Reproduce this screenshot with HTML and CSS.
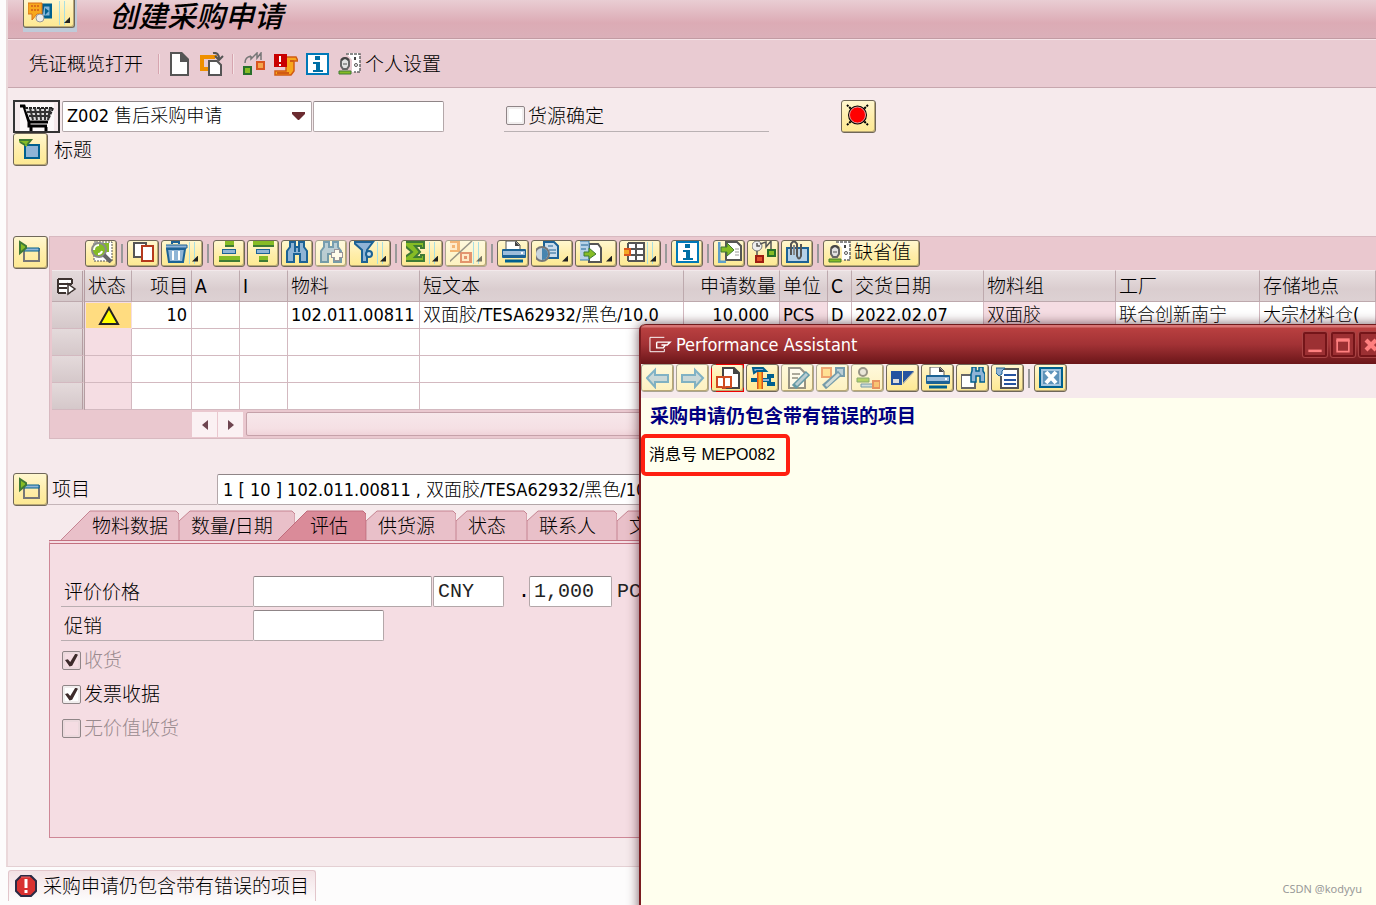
FILE: index.html
```html
<!DOCTYPE html>
<html lang="zh-CN">
<head>
<meta charset="utf-8">
<title>创建采购申请</title>
<link rel="stylesheet" href="styles.css">
</head>
<body>
<svg class="defs" aria-hidden="true">
  <symbol id="i-detail" viewBox="0 0 24 22"><path d="M6 1H22V20H4V1z" fill="#fff" stroke="#555" stroke-dasharray="2 1"/><rect x="6" y="2" width="13" height="9" fill="#86bc25"/><circle cx="9" cy="9" r="7" fill="#86bc25" stroke="#8a8a8a" stroke-width="2"/><path d="M4 9a5 5 0 0 1 5-5M8 13a4 4 0 0 0 4-3" fill="none" stroke="#fff" stroke-width="2"/><path d="M14 14l7 7" stroke="#666" stroke-width="4"/></symbol>
  <symbol id="i-copy" viewBox="0 0 24 22"><path d="M2 2H14V16H2z" fill="#fff" stroke="#555" stroke-width="2"/><path d="M10 5H21V20H10z" fill="#fff" stroke="#b5391c" stroke-width="2"/></symbol>
  <symbol id="i-trash" viewBox="0 0 24 22"><path d="M1 8L3 21H17L19 8z" fill="#8fb4d6" stroke="#1c6295" stroke-width="2"/><path d="M-2 4H21V7H-2z" fill="#8fb4d6" stroke="#1c6295"/><path d="M6 3V1H13V3" fill="none" stroke="#1c6295" stroke-width="2"/><path d="M7 10V19M13 10V19" stroke="#fff" stroke-width="2"/></symbol>
  <symbol id="i-asc" viewBox="0 0 24 22"><path d="M7 0H16V5H7zM1 15H22V20H1z" fill="#86bc25"/><path d="M7 5H16M1 20H22" stroke="#3f7a35" stroke-width="2"/><rect x="4.500" y="8.500" width="13" height="4" fill="#8fb4d6" stroke="#1c6295"/></symbol>
  <symbol id="i-desc" viewBox="0 0 24 22"><path d="M1 0H22V5H1zM7 15H16V20H7z" fill="#86bc25"/><path d="M1 5H22M7 20H16" stroke="#3f7a35" stroke-width="2"/><rect x="4.500" y="8.500" width="13" height="4" fill="#8fb4d6" stroke="#1c6295"/></symbol>
  <symbol id="i-find" viewBox="0 0 24 22"><path d="M4 1H9V6H13V1H18V6L21 10V21H14V13H8V21H1V10L4 6z" fill="#8fb4d6" stroke="#1c6295" stroke-width="2"/><path d="M9 6V11M13 6V11" stroke="#1c6295" stroke-width="2"/></symbol>
  <symbol id="i-findnext" viewBox="0 0 24 22"><path d="M4 1H9V6H13V1H18V6L21 10V21H14V13H8V21H1V10L4 6z" fill="#8fb4d6" stroke="#1c6295" stroke-width="2"/><path d="M17 8V20M11 14H23" stroke="#557" stroke-width="6"/><path d="M17 9V19M12 14H22" stroke="#fff" stroke-width="4"/></symbol>
  <symbol id="i-filter" viewBox="0 0 24 22"><path d="M-1 1H19L13 9V21H8V9z" fill="#8fb4d6" stroke="#1c6295" stroke-width="2"/><circle cx="15" cy="13" r="3" fill="#c5dbe9" stroke="#1c6295" stroke-width="2"/></symbol>
  <symbol id="i-sum" viewBox="0 0 24 22"><path d="M-1 1H18V7H15V5H9L14 11L9 16H15V14H18V20H-1V16L6 11L-1 5z" fill="#86bc25" stroke="#3f7a35" stroke-width="2"/></symbol>
  <symbol id="i-percent" viewBox="0 0 24 22"><rect x="-2" width="12" height="11" fill="#ec8a35"/><rect x="10" y="11" width="12" height="11" fill="#d25632"/><path d="M1 3H6V8H1zM13 14H18V19H13z" fill="none" stroke="#ffe4c4" stroke-width="2"/><path d="M-2 22L22 0" stroke="#555" stroke-width="1.500"/></symbol>
  <symbol id="i-print" viewBox="0 0 24 22"><path d="M4 9V0H14L18 4V9" fill="#fff" stroke="#555"/><path d="M13 0L18 5H13z" fill="#444"/><rect x="0" y="8" width="24" height="9" rx="1" fill="#1c6295"/><rect x="1" y="10" width="22" height="4" fill="#9dbddb"/><rect x="19" y="11" width="2" height="2" fill="#fff"/><path d="M3 20H21" stroke="#00608f" stroke-width="3"/></symbol>
  <symbol id="i-views" viewBox="0 0 24 22"><path d="M8 1H18L22 5V17H8z" fill="#c9dcec" stroke="#1c6295" stroke-width="2"/><path d="M12 5H17M13 9H20M14 12H20" stroke="#1c6295"/><circle cx="6" cy="13" r="7" fill="#c8d4dd" stroke="#777" stroke-width="2"/><path d="M6 7A6 6 0 0 1 6 19z" fill="#4885af"/></symbol>
  <symbol id="i-export" viewBox="0 0 24 22"><path d="M9 3H18L21 7V21H9z" fill="#fff" stroke="#555" stroke-width="2"/><path d="M-1 0H9V19H-1z" fill="#b8d1e7" stroke="#3a7fad"/><path d="M1 4H8M1 8H6" stroke="#1c6295"/><path d="M4 11H9V7L16 13L9 18V15H4z" fill="#86bc25" stroke="#3f7a35"/></symbol>
  <symbol id="i-layout" viewBox="0 0 24 22"><path d="M4 2H21V20H4z" fill="#fff"/><path d="M4 2H21M4 8H21M4 14H21M4 20H21M4 2V20M12 2V20M20 2V20" stroke="#555" stroke-width="2" fill="none"/><rect x="-2" y="8" width="8" height="6" fill="#f5a623" stroke="#d9541e" stroke-width="2"/></symbol>
  <symbol id="i-info" viewBox="0 0 24 22"><path d="M1 1H22V21H1z" fill="#fff" stroke="#0079b8" stroke-width="2"/><path d="M9 3H14V7H9zM7 9H14V17H17V19H7V17H10V11H7z" fill="#006fa5"/></symbol>
  <symbol id="i-import" viewBox="0 0 24 22"><path d="M8 1H19L23 5V19H8z" fill="#fff" stroke="#555" stroke-width="2"/><path d="M17 8H21M17 11H21M17 14H21" stroke="#999"/><path d="M1 1V21H8" fill="none" stroke="#5f9fca" stroke-width="3"/><path d="M3 6H9V2L16 9L9 15V11H3z" fill="#86bc25" stroke="#3f7a35"/></symbol>
  <symbol id="i-relations" viewBox="0 0 24 22"><circle cx="5" cy="5" r="5" fill="#eee" stroke="#777"/><path d="M5 2V5H8M5 10V15M8 3L14 1V6L19 0V8" fill="none" stroke="#555" stroke-width="1.500"/><path d="M4 15H11V21H4z" fill="#e0522d" stroke="#9f1c12" stroke-width="2"/><path d="M16 9H23V15H16z" fill="#86bc25" stroke="#28702a" stroke-width="2"/></symbol>
  <symbol id="i-attach" viewBox="0 0 24 22"><path d="M1 7H22V21H1z" fill="#b5d0e7" stroke="#1c6295" stroke-width="2"/><path d="M5 14V3Q8-2 11 3V15Q13 20 15 15V3" fill="none" stroke="#555" stroke-width="2"/><path d="M8 4V14" stroke="#888" stroke-width="2"/></symbol>
  <symbol id="i-user" viewBox="0 0 24 22"><path d="M8 0H22V19H14V7z" fill="#fff"/><path d="M8 1H22V19H16" fill="none" stroke="#666" stroke-width="1.500" stroke-dasharray="3 1"/><path d="M17 4V7" stroke="#444" stroke-width="2"/><circle cx="18" cy="12" r="1.500" fill="none" stroke="#555"/><path d="M3 8Q7 2 11 8V13L9 16H5L3 13z" fill="#e2e2e2" stroke="#666" stroke-width="2"/><path d="M3 7Q7 3 11 7" fill="none" stroke="#444" stroke-width="2"/><path d="M6 10V12M8 10V12" stroke="#555"/><path d="M1 21V18H13V21z" fill="#86bc25" stroke="#3f7a35"/></symbol>
  <symbol id="i-new" viewBox="0 0 24 24"><path d="M3 1H13L20 8V23H3z" fill="#fff" stroke="#555" stroke-width="2"/><path d="M12 0H14L21 7V10H12z" fill="#555"/></symbol>
  <symbol id="i-other" viewBox="0 0 24 24"><path d="M15 6V5H2V17H9" fill="none" stroke="#ef9000" stroke-width="4"/><path d="M9 9H17L21 13V23H9z" fill="#fff" stroke="#555" stroke-width="2"/><path d="M13 1Q19 0 19 7M15 4L19 8L23 4" fill="none" stroke="#555" stroke-width="2"/></symbol>
  <symbol id="i-assign" viewBox="0 0 24 24"><path d="M3 11Q3 5 9 4M9 4V7L15 1V6L19 1V8" fill="none" stroke="#777" stroke-width="1.500"/><path d="M2 15H9V22H2z" fill="#86bc25" stroke="#28702a" stroke-width="2"/><path d="M15 10H22V17H15z" fill="#f5a44a" stroke="#d9541e" stroke-width="2"/></symbol>
  <symbol id="i-messages" viewBox="0 0 24 24"><path d="M12 5H22L24 9H20V19L17 23H1V19H12z" fill="#f7a61c" stroke="#d25b12" stroke-width="1.500"/><path d="M3 21H15M16 9H20" stroke="#d25b12" stroke-width="2"/><rect x="0" y="2" width="13" height="13" fill="#c90000"/><path d="M6 4V10M6 12V14" stroke="#fff" stroke-width="2"/></symbol>
  <symbol id="i-expand" viewBox="0 0 24 24"><path d="M7 9H21V22H7z" fill="#8fb4d6" stroke="#00608f" stroke-width="2"/><path d="M1 4H12V6L9 8V11L6 9L1 6z" fill="#86bc25"/><path d="M1 4H13L9 9M2 6L7 9" fill="none" stroke="#3f7a35" stroke-width="2"/></symbol>
  <symbol id="i-collapse" viewBox="0 0 24 24"><path d="M6 10H21V22H6z" fill="none" stroke="#777" stroke-width="2"/><path d="M6 9H21V12H6z" fill="#8fb4d6" stroke="#00608f"/><path d="M2 3V14L8 9V7z" fill="#86bc25" stroke="#3f7a35" stroke-width="2"/></symbol>
  <symbol id="i-cart" viewBox="0 0 34 28"><rect width="34" height="28" fill="#fff" opacity=".7"/><path d="M0 3H4L9 19H28M27 23H9V19M11 24V28M26 24V28" fill="none" stroke="#000" stroke-width="3"/><path d="M5 5H33L28 17H10z" fill="#ddd"/><path d="M5 5H33L28 17" fill="none" stroke="#222" stroke-width="2" stroke-dasharray="3 1"/><path d="M10 5L13 17M15 5L17 17M20 5L21 17M25 5L25 17M30 5L28 17M7 9H31M9 13H30" stroke="#333" stroke-width="2"/></symbol>
  <symbol id="i-stop" viewBox="0 0 24 24"><path d="M1 2L22 22M22 2L1 22" stroke="#000" stroke-width="2" stroke-dasharray="2 1"/><circle cx="11.500" cy="12" r="9.500" fill="#000"/><circle cx="11.500" cy="12" r="8" fill="#f00" stroke="#eba0a0"/></symbol>
  <symbol id="i-back" viewBox="0 0 24 22"><path d="M1 11L9 3V8H22V15H9V20z" fill="#a9c6df" stroke="#2f86bd" stroke-width="2"/></symbol>
  <symbol id="i-next" viewBox="0 0 24 22"><path d="M22 11L14 3V8H1V15H14V20z" fill="#a9c6df" stroke="#2f86bd" stroke-width="2"/></symbol>
  <symbol id="i-doc" viewBox="0 0 24 22"><path d="M7 1H18L23 6V21H7z" fill="#fff" stroke="#444" stroke-width="2"/><path d="M17 0L24 7H17z" fill="#444"/><path d="M1 10H7L8 11L9 10H15V20H10L8 22L6 20H1z" fill="#fff" stroke="#cf4b20" stroke-width="2"/><path d="M8 11V21" stroke="#cf4b20" stroke-width="2"/></symbol>
  <symbol id="i-tools" viewBox="0 0 24 22"><path d="M9 5V22" stroke="#d9541e" stroke-width="6"/><path d="M9 5V22" stroke="#ffb625" stroke-width="3"/><path d="M2 1H12L15 4H6L3 6z" fill="#8fb4d6" stroke="#00608f" stroke-width="2"/><path d="M0 13H6M12 13H18M23 9H18V17H24" fill="none" stroke="#00608f" stroke-width="4"/><path d="M12 13H18" stroke="#8fb4d6" stroke-width="2"/></symbol>
  <symbol id="i-edit" viewBox="0 0 24 22"><path d="M3 1H14L19 6V21H3z" fill="#fff" stroke="#555" stroke-width="2"/><path d="M6 7H14M6 11H12" stroke="#777" stroke-width="2"/><path d="M8 20L22 6" stroke="#00608f" stroke-width="6"/><path d="M10 18L21 7" stroke="#8fb4d6" stroke-width="3"/></symbol>
  <symbol id="i-translate" viewBox="0 0 24 22"><path d="M1 1H10V10H1z" fill="#ffd36a" stroke="#e57030" stroke-width="2"/><path d="M15 1H23V9H15z" fill="#8fb4d6" stroke="#1c6295" stroke-width="2"/><path d="M3 20L19 6" stroke="#1c6295" stroke-width="6"/><path d="M5 19L18 7" stroke="#b4cce0" stroke-width="3"/></symbol>
  <symbol id="i-userkey" viewBox="0 0 24 22"><circle cx="7" cy="5" r="4" fill="#ddd" stroke="#555" stroke-width="2"/><path d="M1 15V11H13V15z" fill="#86bc25" stroke="#3f7a35"/><path d="M5 17H18V20H5z" fill="#b5d0e7" stroke="#1c6295"/><path d="M17 14H24V21H17z" fill="#f6a63b" stroke="#d9541e" stroke-width="2"/></symbol>
  <symbol id="i-docs" viewBox="0 0 24 22"><path d="M0 4H11V18H0z" fill="#2554a0"/><rect x="2" y="12" width="6" height="4" fill="#ddd"/><path d="M12 4H23L12 16z" fill="#2554a0"/><path d="M23 5L12 17" stroke="#b9b7a7"/></symbol>
  <symbol id="i-findwin" viewBox="0 0 24 22"><path d="M0 8H14V21H0z" fill="#fff" stroke="#666" stroke-width="2"/><path d="M11 0H15V4H18V0H22V4L24 7V15H19V9H15V15H10V7L11 4z" fill="#8fb4d6" stroke="#00608f" stroke-width="1.500"/></symbol>
  <symbol id="i-list" viewBox="0 0 24 22"><path d="M6 2H22V21H5V9" fill="#fff" stroke="#555" stroke-width="2"/><path d="M8 7H20V9H8zM8 12H20V14H8zM8 16H20V18H8z" fill="#2554a0"/><path d="M0 1H9L6 4V7L3 9L0 6z" fill="#8fb4d6" stroke="#1c6295"/></symbol>
  <symbol id="i-cancel" viewBox="0 0 24 22"><path d="M1 1H23V20H1z" fill="#5e93ba" stroke="#00608f" stroke-width="2"/><path d="M3 3H21V18H3z" fill="none" stroke="#a4c5df" stroke-width="2"/><path d="M7 5L17 16M17 5L7 16" stroke="#fff" stroke-width="4"/></symbol>
  <symbol id="i-services" viewBox="0 0 24 24"><path d="M15 4H23V16H13z" fill="#83b5d7" stroke="#00608f" stroke-width="3"/><path d="M17 7V14L21 10z" fill="#00608f"/><path d="M0 2H14V13H9L4 19V13H0z" fill="#f7a81e" stroke="#d9701a"/><path d="M3 5H12M3 9H11" stroke="#d9701a" stroke-width="2" stroke-dasharray="2 1"/><circle cx="12" cy="17" r="4" fill="#eee" stroke="#999"/></symbol>
  <symbol id="i-select" viewBox="0 0 24 24"><path d="M3 5H17V19H3z" fill="#fff"/><path d="M3 5H17M3 10H17M3 14H12M3 19H11M3 5V19M17 5V10" fill="none" stroke="#3d3330" stroke-width="2"/><path d="M13 10V20L20 15z" fill="#fff" stroke="#3d3330" stroke-width="1.500"/></symbol>
  <symbol id="i-window" viewBox="0 0 24 20"><path d="M16 2H1V17H16V14" fill="none" stroke="#fff" stroke-width="1"/><path d="M8 7H22L19 10H13M8 7V13H15L17 10" fill="none" stroke="#fff" stroke-width="1.500"/></symbol>
</svg>

<div class="app">
  <main class="frame">
    <header class="titlebar">
      <div class="services"><button class="btn split" aria-label="服务"><svg class="ic sq"><use href="#i-services"/></svg></button></div>
      <h1>创建采购申请</h1>
    </header>
    <nav class="appbar">
      <button class="flat text">凭证概览打开</button>
      <span class="rule"></span>
      <button class="flat" aria-label="新建"><svg class="ic sq"><use href="#i-new"/></svg></button>
      <button class="flat" aria-label="其他"><svg class="ic sq"><use href="#i-other"/></svg></button>
      <span class="rule"></span>
      <button class="flat" aria-label="分配"><svg class="ic sq"><use href="#i-assign"/></svg></button>
      <button class="flat" aria-label="消息"><svg class="ic sq"><use href="#i-messages"/></svg></button>
      <button class="flat" aria-label="信息"><svg class="ic"><use href="#i-info"/></svg></button>
      <button class="flat text personal"><svg class="ic"><use href="#i-user"/></svg>个人设置</button>
    </nav>

    <section class="content">
      <div class="docrow">
        <span class="cart"><svg><use href="#i-cart"/></svg></span>
        <div class="combo doctype">
          <select aria-label="凭证类型"><option>Z002 售后采购申请</option></select>
          <svg class="arrow" viewBox="0 0 13 8"><path d="M0 0H13V2L7 8H6L0 2z" fill="#6b2b30"/></svg>
        </div>
        <input class="field docno" type="text" aria-label="申请编号">
        <label class="check source"><input type="checkbox">货源确定</label>
        <button class="btn big" aria-label="停止"><svg class="ic sq"><use href="#i-stop"/></svg></button>
      </div>
      <div class="headrow">
        <button class="btn big" aria-label="展开标题"><svg class="ic sq"><use href="#i-expand"/></svg></button>
        <span>标题</span>
      </div>

      <div class="overview">
        <button class="btn big" aria-label="收缩概览"><svg class="ic sq"><use href="#i-collapse"/></svg></button>
        <div class="grid">
          <div class="gridbar">
            <button class="btn" aria-label="明细"><svg class="ic"><use href="#i-detail"/></svg></button>
            <i class="sep"></i>
            <button class="btn" aria-label="复制"><svg class="ic"><use href="#i-copy"/></svg></button>
            <button class="btn split" aria-label="删除"><svg class="ic"><use href="#i-trash"/></svg></button>
            <i class="sep"></i>
            <button class="btn" aria-label="升序"><svg class="ic"><use href="#i-asc"/></svg></button>
            <button class="btn" aria-label="降序"><svg class="ic"><use href="#i-desc"/></svg></button>
            <button class="btn" aria-label="查找"><svg class="ic"><use href="#i-find"/></svg></button>
            <button class="btn" aria-label="查找下一个" disabled><svg class="ic"><use href="#i-findnext"/></svg></button>
            <button class="btn split" aria-label="过滤"><svg class="ic"><use href="#i-filter"/></svg></button>
            <i class="sep"></i>
            <button class="btn split" aria-label="总计"><svg class="ic"><use href="#i-sum"/></svg></button>
            <button class="btn split" aria-label="小计" disabled><svg class="ic"><use href="#i-percent"/></svg></button>
            <i class="sep"></i>
            <button class="btn" aria-label="打印"><svg class="ic"><use href="#i-print"/></svg></button>
            <button class="btn menu" aria-label="视图"><svg class="ic"><use href="#i-views"/></svg></button>
            <button class="btn menu" aria-label="导出"><svg class="ic"><use href="#i-export"/></svg></button>
            <button class="btn split" aria-label="布局"><svg class="ic"><use href="#i-layout"/></svg></button>
            <i class="sep"></i>
            <button class="btn" aria-label="信息"><svg class="ic"><use href="#i-info"/></svg></button>
            <i class="sep"></i>
            <button class="btn" aria-label="导入"><svg class="ic"><use href="#i-import"/></svg></button>
            <button class="btn" aria-label="关系"><svg class="ic"><use href="#i-relations"/></svg></button>
            <button class="btn" aria-label="附件"><svg class="ic"><use href="#i-attach"/></svg></button>
            <i class="sep"></i>
            <button class="btn wide"><svg class="ic"><use href="#i-user"/></svg>缺省值</button>
          </div>
          <table>
            <colgroup><col class="c33"><col class="c47"><col class="c60"><col class="c48"><col class="c48"><col class="c132"><col class="c264"><col class="c96"><col class="c48"><col class="c24"><col class="c132"><col class="c132"><col class="c144"><col></colgroup>
            <thead><tr><th class="pick"><svg class="ic sq"><use href="#i-select"/></svg></th><th>状态</th><th class="num">项目</th><th>A</th><th>I</th><th>物料</th><th>短文本</th><th class="num">申请数量</th><th>单位</th><th>C</th><th>交货日期</th><th>物料组</th><th>工厂</th><th>存储地点</th></tr></thead>
            <tbody>
              <tr><td class="pick"></td><td class="warn"><svg viewBox="0 0 22 20"><path d="M11 2L20 18H2z" fill="#ff0" stroke="#222" stroke-width="2"/></svg></td><td class="num">10</td><td></td><td></td><td>102.011.00811</td><td>双面胶/TESA62932/黑色/10.0</td><td class="num">10.000</td><td class="ro">PCS</td><td>D</td><td>2022.02.07</td><td class="ro">双面胶</td><td>联合创新南宁</td><td>大宗材料仓(</td></tr>
              <tr><td class="pick"></td><td class="ro"></td><td></td><td></td><td></td><td></td><td></td><td></td><td class="ro"></td><td></td><td></td><td class="ro"></td><td></td><td></td></tr>
              <tr><td class="pick"></td><td class="ro"></td><td></td><td></td><td></td><td></td><td></td><td></td><td class="ro"></td><td></td><td></td><td class="ro"></td><td></td><td></td></tr>
              <tr><td class="pick"></td><td class="ro"></td><td></td><td></td><td></td><td></td><td></td><td></td><td class="ro"></td><td></td><td></td><td class="ro"></td><td></td><td></td></tr>
            </tbody>
          </table>
          <div class="hscroll">
            <button aria-label="向左"><svg viewBox="0 0 8 12"><path d="M7 1V11L1 6z" fill="#6e4550"/></svg></button>
            <button aria-label="向右"><svg viewBox="0 0 8 12"><path d="M1 1V11L7 6z" fill="#6e4550"/></svg></button>
            <div class="thumb"></div>
          </div>
        </div>
      </div>

      <div class="itemrow">
        <button class="btn big" aria-label="收缩项目"><svg class="ic sq"><use href="#i-collapse"/></svg></button>
        <label for="item">项目</label>
        <div class="combo item"><select id="item"><option>1 [ 10 ] 102.011.00811 , 双面胶/TESA62932/黑色/10.0</option></select></div>
      </div>

      <div class="details">
        <div class="tabs" role="tablist">
          <button class="tab first" role="tab"><svg viewBox="0 0 118 30"><path d="M0 30L29 1H115L118 4V30"/></svg><span>物料数据</span></button>
          <button class="tab second" role="tab"><svg viewBox="0 0 116 30"><path d="M0 30V11L11 1H113L116 4V30"/></svg><span>数量/日期</span></button>
          <button class="tab active" role="tab" aria-selected="true"><svg viewBox="0 0 88 30"><path d="M0 30L29 1H85L88 4V30"/></svg><span>评估</span></button>
          <button class="tab mid" role="tab"><svg viewBox="0 0 90 30"><path d="M0 30V11L11 1H87L90 4V30"/></svg><span>供货源</span></button>
          <button class="tab short" role="tab"><svg viewBox="0 0 71 30"><path d="M0 30V11L11 1H68L71 4V30"/></svg><span>状态</span></button>
          <button class="tab mid" role="tab"><svg viewBox="0 0 90 30"><path d="M0 30V11L11 1H87L90 4V30"/></svg><span>联系人</span></button>
          <button class="tab mid" role="tab"><svg viewBox="0 0 90 30"><path d="M0 30V11L11 1H87L90 4V30"/></svg><span>文本</span></button>
        </div>
        <div class="panel">
          <div class="line">
            <label for="price">评价价格</label>
            <input id="price" class="field price" type="text">
            <input class="field cur" type="text" value="CNY" aria-label="货币">
            <span class="dot">.</span>
            <input class="field per" type="text" value="1,000" aria-label="价格单位">
            <span class="uom">PCS</span>
          </div>
          <div class="line">
            <label for="promo">促销</label>
            <input id="promo" class="field promo" type="text">
          </div>
          <label class="check"><input type="checkbox" checked disabled>收货</label>
          <label class="check"><input type="checkbox" checked>发票收据</label>
          <label class="check"><input type="checkbox" disabled>无价值收货</label>
        </div>
      </div>
    </section>
  </main>

  <footer class="status">
    <div class="message">
      <svg viewBox="0 0 22 22"><path d="M6 1H16L21 6V16L16 21H6L1 16V6z" fill="#d83030" stroke="#2b2b45" stroke-width="2"/><path d="M6 2H15" stroke="#f06a6a"/><path d="M11 4V13M11 15V18" stroke="#fff" stroke-width="3"/></svg>
      采购申请仍包含带有错误的项目
    </div>
  </footer>
</div>

<aside class="popup" role="dialog" aria-label="Performance Assistant">
  <header class="poptitle">
    <svg class="wicon"><use href="#i-window"/></svg>
    <h2>Performance Assistant</h2>
    <button aria-label="最小化"><svg viewBox="0 0 24 24"><path d="M4 19H20" stroke="#ff8080" stroke-width="3"/></svg></button>
    <button aria-label="最大化"><svg viewBox="0 0 24 24"><path d="M5 6V20H19V6" fill="none" stroke="#ff8080" stroke-width="2"/><path d="M4 6H20" stroke="#ff8080" stroke-width="4"/></svg></button>
    <button aria-label="关闭"><svg viewBox="0 0 24 24"><path d="M6 6L18 18M18 6L6 18" stroke="#ff8080" stroke-width="5"/></svg></button>
  </header>
  <div class="popbar">
    <button class="btn" aria-label="后退" disabled><svg class="ic"><use href="#i-back"/></svg></button>
    <button class="btn" aria-label="前进" disabled><svg class="ic"><use href="#i-next"/></svg></button>
    <button class="btn focus" aria-label="文档"><svg class="ic"><use href="#i-doc"/></svg></button>
    <button class="btn" aria-label="工具"><svg class="ic"><use href="#i-tools"/></svg></button>
    <button class="btn" aria-label="编辑" disabled><svg class="ic"><use href="#i-edit"/></svg></button>
    <button class="btn" aria-label="翻译" disabled><svg class="ic"><use href="#i-translate"/></svg></button>
    <button class="btn" aria-label="权限" disabled><svg class="ic"><use href="#i-userkey"/></svg></button>
    <button class="btn" aria-label="技术信息"><svg class="ic"><use href="#i-docs"/></svg></button>
    <button class="btn" aria-label="打印"><svg class="ic"><use href="#i-print"/></svg></button>
    <button class="btn" aria-label="查找"><svg class="ic"><use href="#i-findwin"/></svg></button>
    <button class="btn" aria-label="设置"><svg class="ic"><use href="#i-list"/></svg></button>
    <i class="sep"></i>
    <button class="btn" aria-label="取消"><svg class="ic"><use href="#i-cancel"/></svg></button>
  </div>
  <div class="popbody">
    <h3>采购申请仍包含带有错误的项目</h3>
    <p>消息号 MEPO082</p>
  </div>
</aside>
<div class="mark">CSDN @kodyyu</div>
</body>
</html>
```
FILE: styles.css
```css
* { box-sizing: border-box; }
html, body { margin: 0; height: 100%; }
body {
  position: relative;
  overflow: hidden;
  background: #fdfcfc;
  color: #000;
  font: 300 19px/24px "DejaVu Sans Condensed", "Noto Sans CJK SC", sans-serif;
  white-space: nowrap;
}
button, input, select { font: inherit; color: inherit; margin: 0; padding: 0; }
h1, h2, h3, p { margin: 0; }
.defs { position: absolute; width: 0; height: 0; }

.app { display: flex; flex-direction: column; height: 100vh; padding-left: 6px; }
.frame {
  flex: 1;
  min-height: 0;
  display: flex;
  flex-direction: column;
  border-left: 2px solid #ead8da;
  border-bottom: 1px solid #e4d0d3;
  background: #f6eaec;
}

/* buttons and icons */
.ic { display: block; width: 24px; height: 22px; flex: none; overflow: visible; }
.ic.sq { height: 24px; }
.btn {
  position: relative;
  flex: none;
  width: 32px;
  height: 27px;
  padding: 0 3px 2px 4px;
  border: 1px solid #6f6759;
  border-radius: 3px;
  background: linear-gradient(#fff7cf, #ffeeac 50%, #fde992);
  box-shadow: inset -1px -1px #b9a875;
  display: flex;
  align-items: center;
}
.btn.big { width: 35px; height: 33px; padding: 0 4px 3px; }
.btn.split, .btn.menu { width: 42px; }
.btn.wide { width: 97px; gap: 2px; }
.btn.split::before {
  content: "";
  position: absolute;
  left: 27px;
  top: 1px;
  bottom: 2px;
  width: 4px;
  border: solid #a9dfe2;
  border-width: 0 1px;
}
.btn.split::after, .btn.menu::after {
  content: "";
  position: absolute;
  right: 4px;
  bottom: 4px;
  width: 6px;
  height: 6px;
  background: #222;
  clip-path: polygon(100% 0, 100% 100%, 0 100%);
}
.btn:disabled { border-color: #aaa491; background: linear-gradient(#fff9dc, #fdf1c0); }
.btn:disabled .ic, .btn:disabled::after { opacity: .6; }
.sep { flex: none; width: 6px; height: 19px; border: solid transparent; border-width: 0 2px; background: #999 content-box; background-clip: content-box; }

/* title and application bar */
.titlebar {
  flex: none;
  display: flex;
  height: 39px;
  padding-left: 15px;
  gap: 32px;
  background: linear-gradient(#e9cdd3, #dcabb5 60%, #dbb0b9);
  border-bottom: 1px solid #c29ba3;
}
.services { width: 54px; height: 32px; background: #bfcbd9; }
.services .btn { width: 52px; height: 28px; border-top: 0; border-radius: 0 0 3px 3px; }
.services .btn.split::before { left: 35px; }
.titlebar h1 { font: italic 500 29px/34px "Liberation Sans", "Noto Sans CJK SC", sans-serif; }
.appbar {
  flex: none;
  display: flex;
  align-items: center;
  height: 49px;
  padding-left: 21px;
  background: #e9cbd2;
  border-top: 1px solid #f6e3e7;
  border-bottom: 1px solid #c7a7ae;
}
.flat { display: flex; align-items: center; justify-content: center; width: 32px; height: 30px; border: 0; background: none; }
.flat.text { width: auto; }
.flat.personal { gap: 3px; margin-left: 4px; }
.rule { width: 2px; height: 20px; margin: 0 4px; background: #d6a5af; border-right: 1px solid #f4e2e5; }
.flat.text + .rule { margin-left: 15px; }

/* form header */
.content { flex: 1; min-height: 0; display: flex; flex-direction: column; padding: 11px 0 28px 5px; }
.field, .combo {
  height: 31px;
  border: 1px solid #b3a7a9;
  border-top-color: #8f8587;
  border-radius: 2px;
  background: #fff;
  outline: 0;
}
.field { padding: 0 4px; }
.combo { position: relative; flex: none; font-size: 18px; }
.combo select { display: block; width: 100%; height: 29px; padding: 0 4px; border: 0; background: none; appearance: none; outline: 0; }
.arrow { position: absolute; right: 6px; top: 10px; width: 13px; height: 8px; pointer-events: none; }
.docrow { display: flex; align-items: center; height: 34px; }
.cart { width: 47px; height: 33px; margin-right: 2px; border: 2px solid #333; overflow: hidden; }
.cart svg { display: block; width: 34px; height: 28px; margin: 1px 5px; }
.doctype { width: 250px; margin-right: 1px; }
.docno { width: 131px; }
.source { width: 265px; height: 31px; margin: 0 72px 0 60px; border-bottom: 1px solid #b9b1b3; padding-left: 2px; }
.check { display: flex; align-items: center; gap: 3px; }
.check input {
  appearance: none;
  flex: none;
  width: 19px;
  height: 19px;
  border: 1px solid #8f8587;
  border-radius: 2px;
  background: #fff;
  box-shadow: inset 0 0 0 2px #f1eeee;
}
.check input:checked::before {
  content: "";
  display: block;
  width: 13px;
  height: 13px;
  margin: 2px;
  background: #3d2b2b;
  clip-path: polygon(0 50%, 22% 45%, 40% 65%, 80% 0, 100% 10%, 55% 95%, 35% 100%);
}
.check input:disabled { background: #f5dde3; box-shadow: inset 0 0 0 2px #ecd9dd; }
.check:has(input:disabled) { color: #998a8e; }
.headrow { display: flex; align-items: center; height: 33px; gap: 6px; margin-bottom: 70px; }

/* item overview grid */
.overview { display: flex; align-items: flex-start; gap: 1px; }
.grid { flex: 1; min-width: 0; border: solid #d8b9c0; border-width: 1px 0 1px 1px; background: #eac8cf; }
.gridbar { display: flex; align-items: center; gap: 2px; height: 33px; padding: 0 0 1px 35px; }
table { width: calc(100% - 2px); table-layout: fixed; border-collapse: separate; border-spacing: 0; font-size: 18px; margin-left: 2px; }
th, td { height: 27px; padding: 0 3px; border: solid #d3b9c0; border-width: 0 1px 1px 0; text-align: left; font-weight: 300; line-height: 24px; overflow: hidden; background: #fff; }
th { height: 32px; font-size: 19px; background: linear-gradient(#e9e0e1, #dacdcf 60%, #ddd1d3); border-color: #bda9ad; border-top: 1px solid #f2e9eb; }
.num { text-align: right; }
td.num { padding-right: 4px; }
td.num:nth-child(8) { padding-right: 10px; }
td.ro { background: #f5dde3; }
td.pick, th.pick { border-right: 3px double #b59da2; background: linear-gradient(#e4dadb, #d5c8ca); }
.warn { background: #ffdc80; padding: 0; border: 1px solid #f5dde3; }
.warn svg { display: block; width: 24px; height: 20px; margin: auto; }
.c33 { width: 33px; } .c47 { width: 47px; } .c60 { width: 60px; } .c48 { width: 48px; }
.c132 { width: 132px; } .c264 { width: 264px; } .c96 { width: 96px; } .c24 { width: 24px; } .c144 { width: 144px; }
.hscroll { display: flex; align-items: center; gap: 1px; height: 28px; padding-left: 142px; }
.hscroll button { width: 25px; height: 25px; border: 0; background: #fbf1f3; }
.hscroll svg { width: 8px; height: 12px; }
.thumb { flex: 1; height: 24px; margin-left: 2px; border: 1px solid #c5a1a9; border-radius: 2px; background: linear-gradient(#f7e7ea, #f5e0e4 70%, #f0d3d9); }

/* item detail */
.itemrow { display: flex; align-items: flex-start; margin-top: 34px; }
.itemrow label { width: 169px; height: 32px; line-height: 32px; padding-left: 4px; border-bottom: 1px solid #c4b5b8; }
.item { flex: 1; margin-top: 1px; }
.item select { padding-left: 5px; }
.details { flex: 1; min-height: 0; display: flex; flex-direction: column; margin: 4px 0 0 36px; }
.tabs { display: flex; height: 30px; padding-left: 12px; }
.tab { position: relative; flex: none; height: 30px; padding: 2px 0 0 12px; border: 0; background: none; text-align: left; }
.tab svg { position: absolute; inset: 0; width: 100%; height: 100%; fill: #e9c0c9; stroke: #c58492; }
.tab span { position: relative; }
.first { width: 118px; padding-left: 31px; }
.second { width: 116px; }
.tab.active { width: 88px; margin-left: -17px; padding-left: 32px; }
.tab.active svg { fill: #da8b99; stroke: #c06c7c; }
.mid { width: 90px; }
.short { width: 71px; }
.panel {
  flex: 1;
  padding: 32px 0 0 11px;
  border: 1px solid #ce8796;
  border-top: 4px double #c37080;
  border-right: 0;
  background: #f5dde3;
}
.line { display: flex; height: 34px; }
.line + .line { height: 33px; }
.line label { width: 192px; height: 31px; padding: 4px 0 0 3px; border-bottom: 1px solid #b9adb0; }
.line .field { color: #222; font: 20px/28px "Liberation Mono", monospace; }
.price { width: 179px; }
.cur { width: 71px; margin-left: 1px; }
.dot { width: 25px; padding-left: 14px; font: 20px/31px "Liberation Mono", monospace; }
.per { width: 83px; }
.uom { padding-left: 5px; color: #222; font: 20px/31px "Liberation Mono", monospace; }
.promo { width: 131px; }
.panel .check { height: 34px; margin-left: 1px; }

/* status bar */
.status { flex: none; height: 38px; padding: 3px 0 0 2px; }
.message {
  display: inline-flex;
  align-items: center;
  gap: 6px;
  height: 31px;
  padding: 0 6px;
  border: 1px solid #e2c6cb;
  border-bottom: 0;
  border-radius: 3px 3px 0 0;
  background: linear-gradient(#f3e2e5, #fdfcfc);
}
.message svg { width: 22px; height: 22px; }

/* assistant window, floating over the document */
.popup {
  position: absolute;
  left: 639px;
  top: 324px;
  right: -9px;
  bottom: -10px;
  display: flex;
  flex-direction: column;
  border-left: 2px solid #7a1c20;
  border-radius: 6px 0 0 0;
  background: #ffffee;
  box-shadow: 0 0 12px rgba(60, 20, 30, .7);
}
.poptitle {
  display: flex;
  align-items: center;
  gap: 4px;
  height: 40px;
  padding: 0 2px 0 8px;
  border-top: 1px solid #701c1e;
  border-radius: 5px 0 0 0;
  background: linear-gradient(#d77474 0 2px, #b94040 3px, #a23235 50%, #6b1619);
  color: #fff;
}
.wicon { width: 23px; height: 20px; }
.poptitle h2 { flex: 1; font-size: 18px; font-weight: 400; }
.poptitle button { width: 24px; height: 25px; border: 2px solid #741519; border-radius: 2px; background: #9c3033; box-shadow: 0 0 0 1px #a84444; }
.poptitle button svg { display: block; width: 20px; height: 20px; }
.popbar { display: flex; align-items: center; gap: 2px; height: 34px; padding-bottom: 6px; background: #f6eaec; }
.popbar .btn { width: 33px; height: 28px; padding-bottom: 1px; }
.focus::after { content: ""; position: absolute; inset: -1px; border: 1px solid #e00; clip-path: polygon(0 0, 15% 0, 15% 15%, 0 15%, 0 85%, 15% 85%, 15% 100%, 0 100%, 85% 100%, 85% 85%, 100% 85%, 100% 100%, 85% 100%, 85% 0, 100% 0, 100% 15%, 85% 15%, 85% 0); }
.popbody h3 { padding: 6px 0 0 9px; font-size: 19px; line-height: 24px; font-weight: 700; color: #000080; }
.popbody p {
  width: 149px;
  height: 42px;
  margin-top: 6px;
  padding-left: 4px;
  border: 4px solid #ff2010;
  border-radius: 5px;
  font: 400 16px/34px "Liberation Sans", "Noto Sans CJK SC", sans-serif;
}
.mark { position: absolute; right: 14px; bottom: 8px; font: 11px/16px "Noto Sans", sans-serif; color: #999; }
```
